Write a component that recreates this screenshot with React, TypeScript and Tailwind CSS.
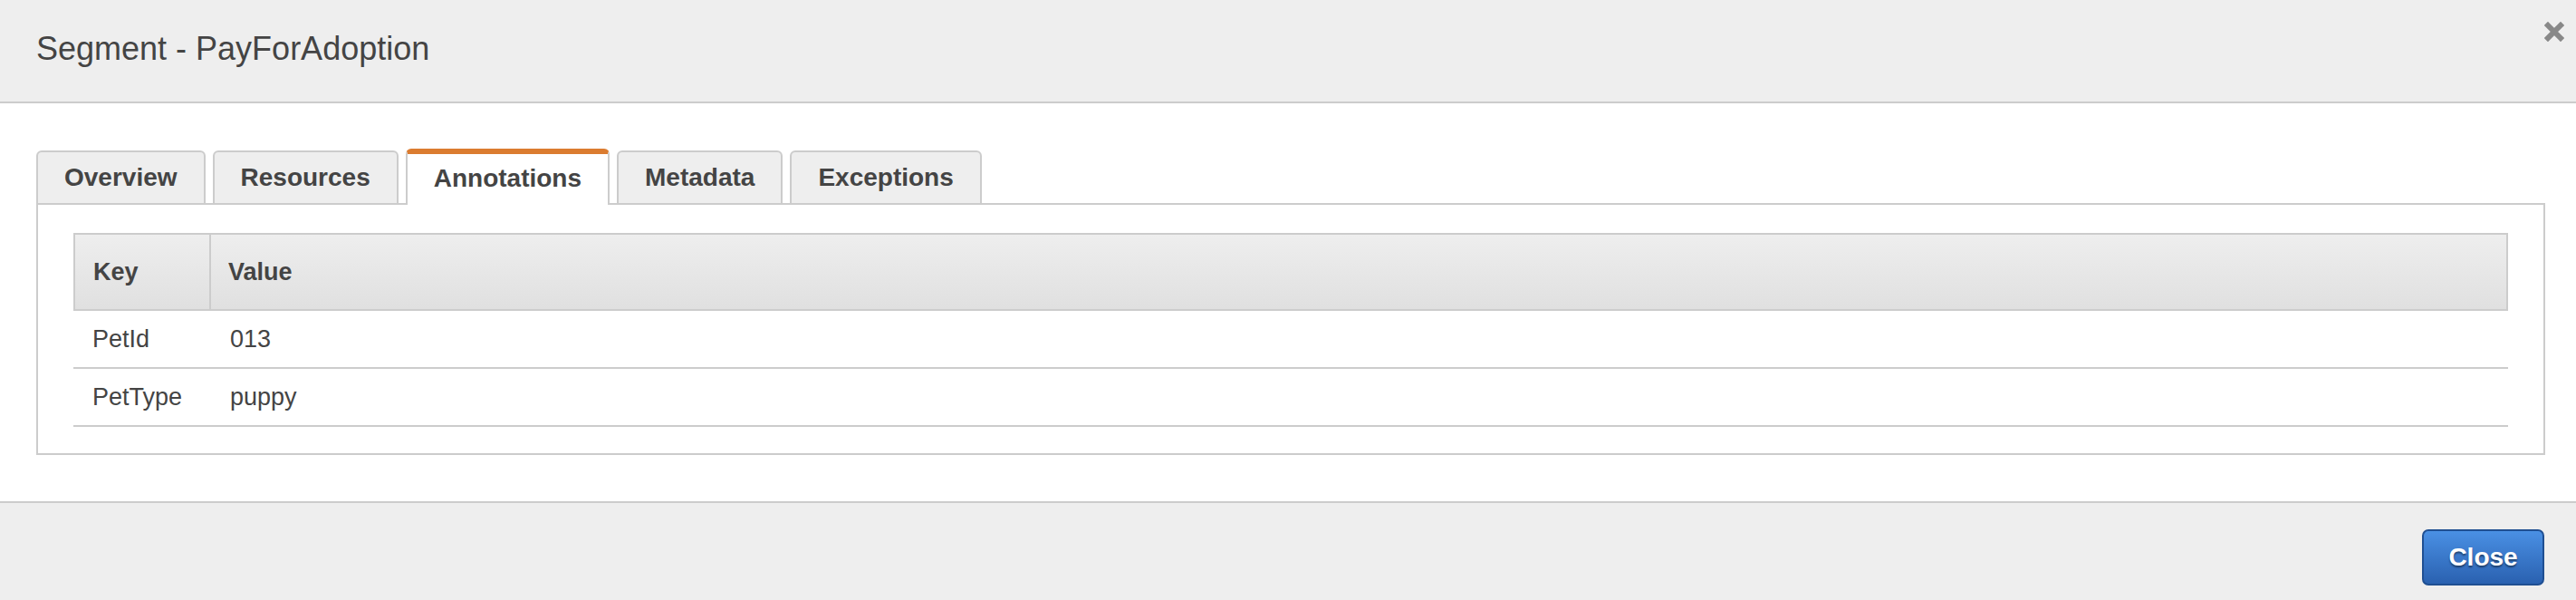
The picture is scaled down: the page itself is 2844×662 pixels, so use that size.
import React from 'react';

const SegmentModal = () => {
  const tabs = ['Overview', 'Resources', 'Annotations', 'Metadata', 'Exceptions'];
  const activeTab = 'Annotations';

  const annotations = [
    { key: 'PetId', value: '013' },
    { key: 'PetType', value: 'puppy' },
  ];

  return (
    <div className="h-[662px] w-full flex flex-col bg-white text-[#444] font-['Liberation_Sans',Arial,sans-serif]">
      {/* Header */}
      <div className="relative h-[114px] shrink-0 bg-[#eeeeee] border-b-2 border-[#cccccc] flex items-center pl-[40px]">
        <h1 className="text-[36px] font-normal leading-none text-[#444] -mt-[4px]">Segment - PayForAdoption</h1>
        <button className="absolute top-[24px] right-[13px] w-[22px] h-[22px] cursor-pointer" aria-label="close">
          <svg viewBox="0 0 22 22" className="w-[22px] h-[22px]">
            <path d="M4 4 L18 18 M18 4 L4 18" stroke="#888888" strokeWidth="6" strokeLinecap="square" />
          </svg>
        </button>
      </div>

      {/* Body */}
      <div className="shrink-0 pt-[50px] pb-[51px] pl-[40px] pr-[34px]">
        {/* Tabs */}
        <div className="relative z-10 flex items-end gap-2 -mb-[2px]">
          {tabs.map((tab) =>
            tab === activeTab ? (
              <div
                key={tab}
                className="h-[62px] px-[29px] flex items-center bg-white border-x-2 border-[#cccccc] border-t-[6px] border-t-[#db7c30] rounded-t-[6px] text-[28px] font-bold text-[#444] pb-[2px]"
              >
                {tab}
              </div>
            ) : (
              <div
                key={tab}
                className="h-[60px] px-[29px] flex items-center bg-[#eeeeee] border-2 border-[#cccccc] rounded-t-[6px] text-[28px] font-bold text-[#444]"
              >
                {tab}
              </div>
            )
          )}
        </div>

        {/* Panel */}
        <div className="border-2 border-[#cccccc] pt-[31px] pb-[29px] px-[39px]">
          <div className="w-full">
            <div className="flex h-[86px] border-2 border-[#cccccc] bg-gradient-to-b from-[#eeeeee] to-[#e0e0e0] text-[27px] font-bold text-[#444]">
              <div className="w-[150px] shrink-0 border-r-2 border-[#cccccc] flex items-center pl-[20px]">Key</div>
              <div className="flex-1 flex items-center pl-[19px]">Value</div>
            </div>
            {annotations.map((row) => (
              <div key={row.key} className="flex h-[64px] border-b-2 border-[#cccccc] text-[27px] text-[#444]">
                <div className="w-[152px] shrink-0 flex items-center pl-[21px]">{row.key}</div>
                <div className="flex-1 flex items-center pl-[21px]">{row.value}</div>
              </div>
            ))}
          </div>
        </div>
      </div>

      {/* Footer */}
      <div className="flex-1 bg-[#eeeeee] border-t-2 border-[#cccccc] flex justify-end items-start pt-[29px] pr-[35px]">
        <button className="w-[135px] h-[62px] rounded-[7px] border-2 border-[#1f4f92] bg-gradient-to-b from-[#4a90e4] to-[#2a61b0] text-white text-[28px] font-bold [text-shadow:0_2px_2px_rgba(0,0,0,0.45)] cursor-pointer">
          Close
        </button>
      </div>
    </div>
  );
};

export default function App() {
  return <SegmentModal />;
}
